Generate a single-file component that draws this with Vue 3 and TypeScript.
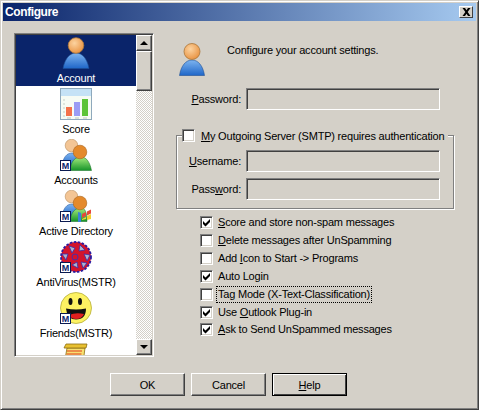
<template>
  <div class="window">
    <div class="titlebar">
      <span class="title">Configure</span>
      <span class="close">
        <svg width="9" height="8" viewBox="0 0 9 8"><path d="M0.500 0 L3 0 L4.500 2.200 L6 0 L8.500 0 L5.700 4 L8.500 8 L6 8 L4.500 5.800 L3 8 L0.500 8 L3.300 4 Z" fill="#000" /></svg>
      </span>
    </div>

    <div class="body">
      <div class="list-box">
        <div class="list">
          <div v-for="item in items" :key="item.icon" class="list-item" :class="{ selected: item.selected }">
            <svg class="list-icon" width="32" height="32" viewBox="0 0 32 32">
              <defs>
                <radialGradient id="skin" cx="0.4" cy="0.35" r="0.7">
                  <stop offset="0" stop-color="#fcd3a0" />
                  <stop offset="1" stop-color="#e8913f" />
                </radialGradient>
                <linearGradient id="blue" x1="0" y1="0" x2="0" y2="1">
                  <stop offset="0" stop-color="#7db4f0" />
                  <stop offset="1" stop-color="#1f66c8" />
                </linearGradient>
                <linearGradient id="green" x1="0" y1="0" x2="0" y2="1">
                  <stop offset="0" stop-color="#a5ec7c" />
                  <stop offset="1" stop-color="#16942a" />
                </linearGradient>
              </defs>

              <g v-if="item.icon === 'account'">
                <path d="M3 31.500 C5 21 10 16 16 16 C22 16 27 21 29 31.500 Z" fill="url(#blue)" stroke="#1d4f96" stroke-width="0.600" />
                <circle cx="16" cy="8.500" r="7.800" fill="url(#skin)" stroke="#a9763a" stroke-width="0.800" />
              </g>

              <g v-else-if="item.icon === 'score'">
                <rect x="0.500" y="0.500" width="31" height="31" fill="#f6fbf4" stroke="#8fa9bc" />
                <rect x="1" y="1" width="30" height="7" fill="#c5e2f6" />
                <path d="M3 12h2M3 16h2M3 20h2M3 24h2M3 28h2" stroke="#c5cfc5" />
                <rect x="6" y="19" width="6" height="9" fill="#f4714a" />
                <rect x="14" y="14" width="6" height="14" fill="#9a9cf4" />
                <rect x="22" y="11" width="6" height="17" fill="#5cc437" />
                <path d="M7 30h4M15 30h4M23 30h4" stroke="#bcc6bc" />
              </g>

              <g v-else-if="item.icon === 'accounts'">
                <path d="M2 27 C3 18 7 14 12 14 C17 14 20 18 21 27 Z" fill="url(#blue)" stroke="#1d4f96" stroke-width="0.500" />
                <circle cx="11.500" cy="6.500" r="6.300" fill="#f3c595" stroke="#b98d5d" stroke-width="0.600" />
                <path d="M10 31.500 C11 22 15 18 21 18 C27 18 30 24 31.500 31.500 Z" fill="url(#green)" stroke="#0e6b1e" stroke-width="0.500" />
                <circle cx="20" cy="13" r="6.800" fill="#e48a2c" stroke="#a86016" stroke-width="0.600" />
              </g>

              <g v-else-if="item.icon === 'directory'">
                <path d="M2 27 C3 18 7 14 12 14 C17 14 20 18 21 27 Z" fill="url(#blue)" stroke="#1d4f96" stroke-width="0.500" />
                <circle cx="11.500" cy="6.500" r="6.300" fill="#f3c595" stroke="#b98d5d" stroke-width="0.600" />
                <path d="M10 31.500 C11 22 15 18 21 18 C25 18 27 22 27 31.500 Z" fill="url(#green)" stroke="#0e6b1e" stroke-width="0.500" />
                <circle cx="20" cy="13" r="6.800" fill="#e48a2c" stroke="#a86016" stroke-width="0.600" />
                <path d="M22 24l4-2v4l-4 2zM27 21.500l4-2v4l-4 2z" fill="#e6483a" />
                <path d="M22 29l4-2v2l-4 1zM27 26l4-2v5l-4 1z" fill="#f4cf2e" />
                <path d="M18 22l3 1v9h-3z" fill="#3a82d8" />
              </g>

              <g v-else-if="item.icon === 'antivirus'">
                <circle cx="16" cy="16" r="15" fill="#d3142c" stroke="#2a1ca0" stroke-width="1.800" stroke-dasharray="2.500 1.500" />
                <g fill="#aeb2cc" stroke="#3a2ca8" stroke-width="0.800">
                  <path d="M9 5l6 2-3 5z" />
                  <path d="M20 4l5 5-6 1z" />
                  <path d="M2 13l6 0-2 6z" />
                  <path d="M24 13l6 1-3 6z" />
                  <path d="M12 24l5-3 1 6z" />
                  <path d="M21 21l6 1-4 5z" />
                </g>
                <circle cx="15" cy="16" r="3" fill="none" stroke="#4a2ca8" />
              </g>

              <g v-else-if="item.icon === 'friends'">
                <circle cx="16" cy="16" r="15.500" fill="#fdf262" stroke="#b5ad3a" stroke-width="0.800" />
                <ellipse cx="10.500" cy="9.500" rx="2" ry="3.500" fill="#111" />
                <ellipse cx="20" cy="9.500" rx="2" ry="3.500" fill="#111" />
                <path d="M6 16.500 Q16 18.500 26 16.500 Q26 27.500 16 27.500 Q7 27.500 6 16.500 Z" fill="#111" />
                <path d="M9 23 Q16 20 24 22 Q22 27 16 27 Q11 27 9 23 Z" fill="#e01f1f" />
              </g>

              <g v-else>
                <path d="M7 5 L25 5 L22 28 L3 28 Z" fill="#f8e070" stroke="#8a6d12" stroke-width="0.800" />
                <path d="M6 1 L27 1 L26 5 L4 5 Z" fill="#e8c030" stroke="#8a6d12" stroke-width="0.800" />
                <path d="M7 8h15M6.500 11h15" stroke="#e03a20" />
              </g>

              <g v-if="item.master">
                <rect x="0.500" y="21.500" width="10" height="10" fill="#fff" stroke="#0a1a50" />
                <text x="5.500" y="30" class="master">M</text>
              </g>
            </svg>
            <span v-if="item.label" class="list-label">{{ item.label }}</span>
          </div>
        </div>
        <div class="scrollbar">
          <span class="scroll-btn"><i class="arrow up"></i></span>
          <span class="scroll-thumb"></span>
          <span class="scroll-track"></span>
          <span class="scroll-btn"><i class="arrow down"></i></span>
        </div>
      </div>

      <div class="panel">
        <div class="intro">
          <svg width="26" height="33" viewBox="0 0 26 33">
            <defs>
              <radialGradient id="skin2" cx="0.4" cy="0.35" r="0.7">
                <stop offset="0" stop-color="#fcd3a0" />
                <stop offset="1" stop-color="#e8913f" />
              </radialGradient>
              <linearGradient id="blue2" x1="0" y1="0" x2="0" y2="1">
                <stop offset="0" stop-color="#7db4f0" />
                <stop offset="1" stop-color="#1f66c8" />
              </linearGradient>
            </defs>
            <path d="M0.500 32.500 C2 22.500 7 17 13 17 C19 17 24 22.500 25.500 32.500 Z" fill="url(#blue2)" stroke="#1d4f96" stroke-width="0.600" />
            <circle cx="13" cy="8.500" r="8" fill="url(#skin2)" stroke="#a9763a" stroke-width="0.800" />
          </svg>
          <span class="intro-text">Configure your account settings.</span>
        </div>

        <div class="field top-field">
          <label><u>P</u>assword:</label>
          <span class="input"></span>
        </div>

        <div class="group">
          <div class="legend">
            <span class="check"></span>
            <span><u>M</u>y Outgoing Server (SMTP) requires authentication</span>
          </div>
          <div class="field">
            <label><u>U</u>sername:</label>
            <span class="input"></span>
          </div>
          <div class="field">
            <label>Pass<u>w</u>ord:</label>
            <span class="input"></span>
          </div>
        </div>

        <div class="options">
          <div v-for="opt in options" :key="opt.text" class="option">
            <span class="check">
              <svg v-if="opt.checked" width="9" height="9" viewBox="0 0 9 9"><path d="M1 3 L3.500 5.500 L8 1 L8 4 L3.500 8.500 L1 6 Z" fill="#000" /></svg>
            </span>
            <span class="option-text" :class="{ focused: opt.focused }">{{ opt.pre }}<u>{{ opt.key }}</u>{{ opt.post }}</span>
          </div>
        </div>
      </div>
    </div>

    <div class="buttons">
      <button class="btn">OK</button>
      <button class="btn">Cancel</button>
      <button class="btn default"><u>H</u>elp</button>
    </div>
  </div>
</template>

<script setup lang="ts">
interface ListItem {
  label: string
  icon: string
  master?: boolean
  selected?: boolean
}

interface Option {
  text: string
  pre: string
  key: string
  post: string
  checked: boolean
  focused?: boolean
}

const items: ListItem[] = [
  { label: 'Account', icon: 'account', selected: true },
  { label: 'Score', icon: 'score' },
  { label: 'Accounts', icon: 'accounts', master: true },
  { label: 'Active Directory', icon: 'directory', master: true },
  { label: 'AntiVirus(MSTR)', icon: 'antivirus', master: true },
  { label: 'Friends(MSTR)', icon: 'friends', master: true },
  { label: '', icon: 'scroll' }
]

const options: Option[] = [
  { text: 'score', pre: '', key: 'S', post: 'core and store non-spam messages', checked: true },
  { text: 'delete', pre: '', key: 'D', post: 'elete messages after UnSpamming', checked: false },
  { text: 'icon', pre: 'Add ', key: 'I', post: 'con to Start -> Programs', checked: false },
  { text: 'login', pre: 'Auto Login', key: '', post: '', checked: true },
  { text: 'tag', pre: 'Tag Mode (X-Text-Classification)', key: '', post: '', checked: false, focused: true },
  { text: 'outlook', pre: 'Use ', key: 'O', post: 'utlook Plug-in', checked: true },
  { text: 'ask', pre: '', key: 'A', post: 'sk to Send UnSpammed messages', checked: true }
]
</script>

<style>
html,
body {
  margin: 0;
  background: #d4d0c8;
}
</style>

<style scoped>
.window {
  width: 479px;
  height: 410px;
  box-sizing: border-box;
  padding: 2px;
  background: #d4d0c8;
  border: 1px solid;
  border-color: #d4d0c8 #404040 #404040 #d4d0c8;
  box-shadow: inset 1px 1px 0 #fff, inset -1px -1px 0 #808080;
  font-family: 'Liberation Sans', Arial, sans-serif;
  font-size: 11px;
  letter-spacing: -0.2px;
  color: #000;
  display: flex;
  flex-direction: column;
  overflow: hidden;
}

.titlebar {
  height: 18px;
  flex: none;
  display: flex;
  align-items: center;
  justify-content: space-between;
  padding: 0 3px 0 2px;
  background: linear-gradient(90deg, #0a246a, #a6caf0);
}

.title {
  color: #fff;
  font-size: 12px;
  font-weight: 700;
  letter-spacing: -0.4px;
}

.close {
  width: 14px;
  height: 12px;
  box-sizing: border-box;
  display: flex;
  align-items: center;
  justify-content: center;
  background: #d4d0c8;
  border: 1px solid;
  border-color: #fff #404040 #404040 #fff;
}

.body {
  display: flex;
  flex: none;
  height: 336px;
}

.list-box {
  width: 140px;
  height: 324px;
  margin: 12px 0 0 11px;
  box-sizing: border-box;
  flex: none;
  display: flex;
  background: #fff;
  border: 1px solid;
  border-color: #808080 #fff #fff #808080;
  box-shadow: inset 1px 1px 0 #404040, inset -1px -1px 0 #d4d0c8;
  padding: 1px;
  overflow: hidden;
}

.list {
  width: 120px;
  overflow: hidden;
}

.list-item {
  height: 51px;
  display: flex;
  flex-direction: column;
  align-items: center;
  padding-top: 2px;
  box-sizing: border-box;
}

.list-item.selected {
  background: #0a246a;
  color: #fff;
}

.list-icon {
  flex: none;
}

.list-label {
  margin-top: 2px;
  line-height: 15px;
  white-space: nowrap;
}

.master {
  font-family: 'Liberation Sans', sans-serif;
  font-size: 9px;
  font-weight: 700;
  fill: #0a246a;
  text-anchor: middle;
}

.scrollbar {
  width: 16px;
  flex: none;
  display: flex;
  flex-direction: column;
  background: repeating-conic-gradient(#d4d0c8 0 25%, #fff 0 50%) 0 0 / 2px 2px;
}

.scroll-btn,
.scroll-thumb {
  display: flex;
  align-items: center;
  justify-content: center;
  box-sizing: border-box;
  background: #d4d0c8;
  border: 1px solid;
  border-color: #fff #404040 #404040 #fff;
  box-shadow: inset -1px -1px 0 #808080;
}

.scroll-btn {
  height: 16px;
  flex: none;
}

.scroll-thumb {
  height: 40px;
  flex: none;
}

.scroll-track {
  flex: 1;
}

.arrow {
  width: 0;
  height: 0;
  border-left: 4px solid transparent;
  border-right: 4px solid transparent;
}

.arrow.up {
  border-bottom: 4px solid #000;
}

.arrow.down {
  border-top: 4px solid #000;
}

.panel {
  flex: 1;
  min-width: 0;
  padding: 22px 0 0 25px;
  box-sizing: border-box;
}

.intro {
  display: flex;
  align-items: flex-start;
  gap: 22px;
  height: 45px;
}

.intro-text {
  margin-top: 1px;
}

.field {
  display: flex;
  align-items: center;
  justify-content: flex-end;
  gap: 5px;
  width: 261px;
}

.field label {
  white-space: nowrap;
}

.input {
  display: block;
  width: 194px;
  height: 22px;
  flex: none;
  box-sizing: border-box;
  background: #d4d0c8;
  border: 1px solid;
  border-color: #808080 #fff #fff #808080;
  box-shadow: inset 1px 1px 0 #404040, inset -1px -1px 0 #d4d0c8;
}

.top-field {
  margin-bottom: 25px;
}

.group {
  position: relative;
  margin-left: -3px;
  padding: 14px 0 0 2px;
  width: 278px;
  height: 74px;
  box-sizing: border-box;
  border: 1px solid #808080;
  box-shadow: 1px 1px 0 #fff, inset 1px 1px 0 #fff;
  display: flex;
  flex-direction: column;
  gap: 6px;
}

.legend {
  position: absolute;
  top: -7px;
  left: 5px;
  display: flex;
  align-items: center;
  gap: 6px;
  padding: 0 4px 0 0;
  background: #d4d0c8;
  white-space: nowrap;
}

.check {
  width: 13px;
  height: 13px;
  flex: none;
  box-sizing: border-box;
  display: flex;
  align-items: center;
  justify-content: center;
  background: #fff;
  border: 1px solid;
  border-color: #808080 #fff #fff #808080;
  box-shadow: inset 1px 1px 0 #404040, inset -1px -1px 0 #d4d0c8;
}

.options {
  margin: 5px 0 0 21px;
}

.option {
  display: flex;
  align-items: center;
  gap: 4px;
  height: 17.85px;
  white-space: nowrap;
}

.option-text {
  padding: 0 1px;
  line-height: 15px;
}

.option-text.focused {
  outline: 1px dotted #000;
}

.buttons {
  display: flex;
  justify-content: flex-start;
  gap: 6px;
  padding: 16px 0 0 107px;
}

.btn {
  width: 75px;
  height: 23px;
  box-sizing: border-box;
  padding: 0;
  background: #d4d0c8;
  border: 1px solid;
  border-color: #fff #404040 #404040 #fff;
  box-shadow: inset -1px -1px 0 #808080;
  font: inherit;
  letter-spacing: inherit;
  color: #000;
}

.btn.default {
  border-color: #000;
  box-shadow: inset 1px 1px 0 #fff, inset -1px -1px 0 #404040;
}
</style>
